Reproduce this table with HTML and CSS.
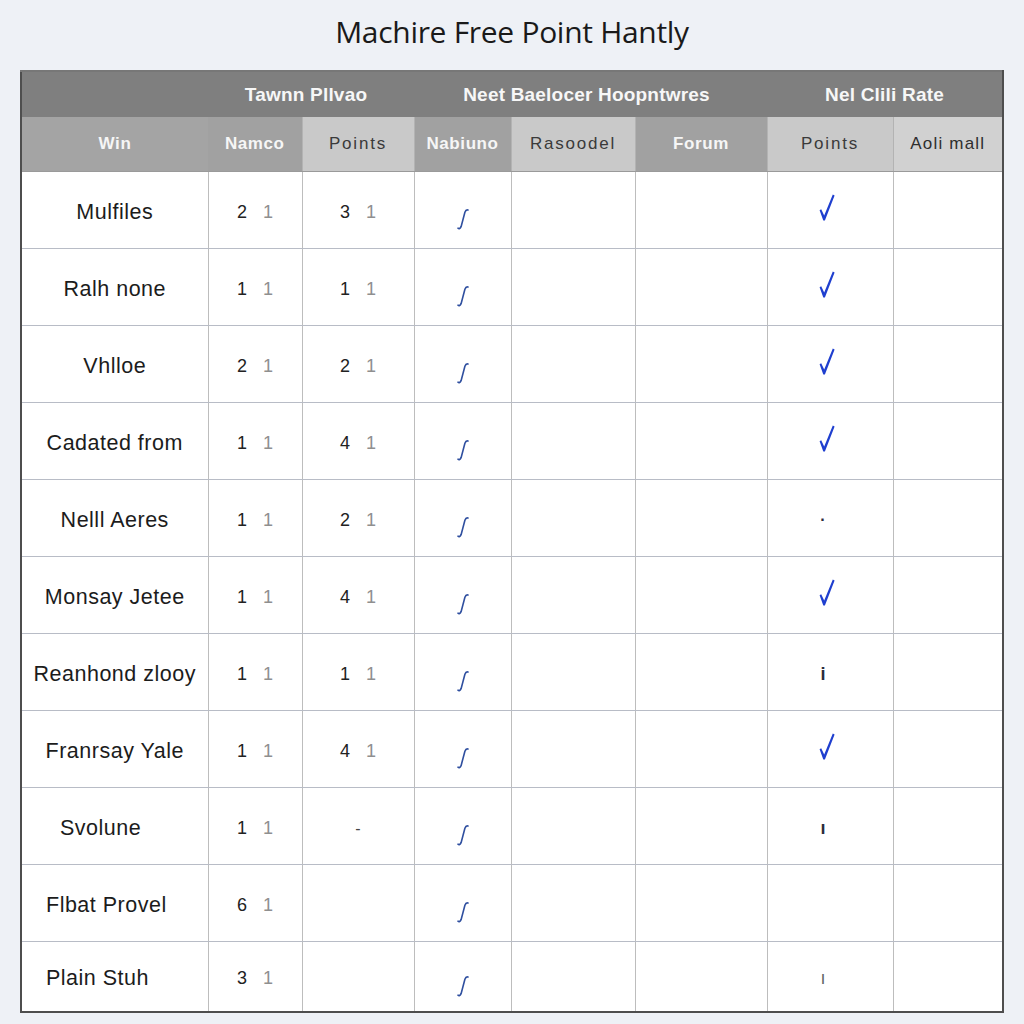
FILE: index.html
```html
<!DOCTYPE html>
<html lang="en">
<head>
<meta charset="utf-8">
<title>Machire Free Point Hantly</title>
<link rel="stylesheet" href="styles.css">
</head>
<body>
<svg width="0" height="0" class="defs">
  <defs>
    <symbol id="integ" viewBox="0 0 12 22">
      <path d="M1 20.2 Q2.6 21.6 4.1 18.6 L7.9 4.2 Q8.9 1.4 11 2" fill="none" stroke="#2f4f9f" stroke-width="1.6" stroke-linecap="round"/>
    </symbol>
    <symbol id="check" viewBox="0 0 16 27">
      <path d="M0.6 16.2 L2.2 15.2 L5.2 21.6 L13.8 0.6 L15.6 1.6 L5.9 26.4 L4.3 26.4 Z" fill="#1f3fcf"/>
    </symbol>
  </defs>
</svg>
<h1 class="title">Machire Free Point Hantly</h1>
<table class="grid">
  <colgroup>
    <col class="c1"><col class="c2"><col class="c3"><col class="c4"><col class="c5"><col class="c6"><col class="c7"><col class="c8">
  </colgroup>
  <thead>
    <tr class="group">
      <th></th>
      <th colspan="2">Tawnn Pllvao</th>
      <th colspan="3">Neet Baelocer Hoopntwres</th>
      <th colspan="2">Nel Clili Rate</th>
    </tr>
    <tr class="sub">
      <th class="dark first">Win</th>
      <th class="dark">Namco</th>
      <th class="light">Points</th>
      <th class="dark">Nabiuno</th>
      <th class="light">Rasoodel</th>
      <th class="dark">Forum</th>
      <th class="light">Points</th>
      <th class="lighter">Aoli mall</th>
    </tr>
  </thead>
  <tbody>
    <tr>
      <td class="name">Mulfiles</td>
      <td class="num"><span>2</span><span class="faint">1</span></td>
      <td class="num"><span>3</span><span class="faint">1</span></td>
      <td class="sym"><svg class="integ"><use href="#integ"/></svg></td>
      <td></td><td></td>
      <td class="pts"><svg class="check"><use href="#check"/></svg></td>
      <td></td>
    </tr>
    <tr>
      <td class="name">Ralh none</td>
      <td class="num"><span>1</span><span class="faint">1</span></td>
      <td class="num"><span>1</span><span class="faint">1</span></td>
      <td class="sym"><svg class="integ"><use href="#integ"/></svg></td>
      <td></td><td></td>
      <td class="pts"><svg class="check"><use href="#check"/></svg></td>
      <td></td>
    </tr>
    <tr>
      <td class="name">Vhlloe</td>
      <td class="num"><span>2</span><span class="faint">1</span></td>
      <td class="num"><span>2</span><span class="faint">1</span></td>
      <td class="sym"><svg class="integ"><use href="#integ"/></svg></td>
      <td></td><td></td>
      <td class="pts"><svg class="check"><use href="#check"/></svg></td>
      <td></td>
    </tr>
    <tr>
      <td class="name">Cadated from</td>
      <td class="num"><span>1</span><span class="faint">1</span></td>
      <td class="num"><span>4</span><span class="faint">1</span></td>
      <td class="sym"><svg class="integ"><use href="#integ"/></svg></td>
      <td></td><td></td>
      <td class="pts"><svg class="check"><use href="#check"/></svg></td>
      <td></td>
    </tr>
    <tr>
      <td class="name">Nelll Aeres</td>
      <td class="num"><span>1</span><span class="faint">1</span></td>
      <td class="num"><span>2</span><span class="faint">1</span></td>
      <td class="sym"><svg class="integ"><use href="#integ"/></svg></td>
      <td></td><td></td>
      <td class="pts"><span class="mark dot">·</span></td>
      <td></td>
    </tr>
    <tr>
      <td class="name">Monsay Jetee</td>
      <td class="num"><span>1</span><span class="faint">1</span></td>
      <td class="num"><span>4</span><span class="faint">1</span></td>
      <td class="sym"><svg class="integ"><use href="#integ"/></svg></td>
      <td></td><td></td>
      <td class="pts"><svg class="check"><use href="#check"/></svg></td>
      <td></td>
    </tr>
    <tr>
      <td class="name">Reanhond zlooy</td>
      <td class="num"><span>1</span><span class="faint">1</span></td>
      <td class="num"><span>1</span><span class="faint">1</span></td>
      <td class="sym"><svg class="integ"><use href="#integ"/></svg></td>
      <td></td><td></td>
      <td class="pts"><span class="mark">i</span></td>
      <td></td>
    </tr>
    <tr>
      <td class="name">Franrsay Yale</td>
      <td class="num"><span>1</span><span class="faint">1</span></td>
      <td class="num"><span>4</span><span class="faint">1</span></td>
      <td class="sym"><svg class="integ"><use href="#integ"/></svg></td>
      <td></td><td></td>
      <td class="pts"><svg class="check"><use href="#check"/></svg></td>
      <td></td>
    </tr>
    <tr>
      <td class="name shift-more">Svolune</td>
      <td class="num"><span>1</span><span class="faint">1</span></td>
      <td class="num"><span class="dash">-</span></td>
      <td class="sym"><svg class="integ"><use href="#integ"/></svg></td>
      <td></td><td></td>
      <td class="pts"><span class="mark">ı</span></td>
      <td></td>
    </tr>
    <tr>
      <td class="name shift">Flbat Provel</td>
      <td class="num"><span>6</span><span class="faint">1</span></td>
      <td></td>
      <td class="sym"><svg class="integ"><use href="#integ"/></svg></td>
      <td></td><td></td>
      <td></td>
      <td></td>
    </tr>
    <tr class="last">
      <td class="name shift">Plain Stuh</td>
      <td class="num"><span>3</span><span class="faint">1</span></td>
      <td></td>
      <td class="sym"><svg class="integ"><use href="#integ"/></svg></td>
      <td></td><td></td>
      <td class="pts"><span class="mark pale">ı</span></td>
      <td></td>
    </tr>
  </tbody>
</table>
</body>
</html>
```
FILE: styles.css
```css
html, body {
  margin: 0;
  padding: 0;
  background: #eef1f6;
}
body {
  font-family: "Liberation Sans", Arial, sans-serif;
  color: #1e1e1e;
}
.defs {
  position: absolute;
  width: 0;
  height: 0;
}
.title {
  margin: 0;
  height: 70px;
  line-height: 64px;
  text-align: center;
  font-family: "Open Sans", sans-serif;
  font-weight: 400;
  font-size: 30px;
  letter-spacing: -0.3px;
  color: #1a1a1a;
}
.grid {
  margin-left: 20px;
  width: 982px;
  table-layout: fixed;
  border-collapse: collapse;
  border: 2px solid #4e4e4e;
  border-top-color: #777;
  background: #fff;
}
.c1 { width: 187px; }
.c2 { width: 94px; }
.c3 { width: 112px; }
.c4 { width: 97px; }
.c5 { width: 124px; }
.c6 { width: 132px; }
.c7 { width: 126px; }
.c8 { width: 110px; }

th {
  padding: 0;
  text-align: center;
}
.group th {
  height: 45px;
  padding-bottom: 0;
  background: #7f7f7f;
  color: #f7f7f7;
  font-weight: 700;
  font-size: 19px;
  letter-spacing: 0.2px;
  line-height: 40px;
}
.group th:nth-child(2) {
  text-indent: -10px;
}
.group th:nth-child(3) {
  text-indent: -8px;
}
.sub th {
  height: 54px;
  font-size: 17px;
  border-right: 1px solid #b3b3b3;
  border-bottom: 1px solid #9a9a9a;
}
.sub th.dark {
  background: #a1a1a1;
  color: #f6f6f6;
  font-weight: 700;
  letter-spacing: 0.6px;
}
.sub th.first {
  border-right: none;
  background: #a4a4a4;
}
.sub th.light {
  background: #c9c9c9;
  color: #3a3a3a;
  font-weight: 400;
  letter-spacing: 1.8px;
}
.sub th.lighter {
  background: #d1d1d1;
  color: #2e2e2e;
  font-weight: 400;
  letter-spacing: 1.2px;
  border-right: none;
}

td {
  height: 72px;
  padding: 4px 0 0;
  border: 1px solid #bdbdbd;
  border-top-color: #b8bcc6;
  border-bottom-color: #b8bcc6;
  text-align: center;
  vertical-align: middle;
}
tr.last td {
  height: 65px;
}
.name {
  font-size: 21.5px;
  letter-spacing: 0.5px;
  color: #1c1c1c;
}
.name.shift {
  text-align: left;
  padding-left: 24px;
}
.name.shift-more {
  text-align: left;
  padding-left: 38px;
}
.num {
  font-size: 18px;
  color: #222;
}
.num span {
  display: inline-block;
}
.num .faint {
  color: #8f8f8f;
  margin-left: 16px;
}
.num .dash {
  color: #444;
  font-size: 16px;
}
.integ {
  display: inline-block;
  width: 12px;
  height: 22px;
  vertical-align: middle;
  transform: translateY(7px);
}
.pts {
  padding-right: 6px;
}
.check {
  display: inline-block;
  width: 16px;
  height: 27px;
  vertical-align: middle;
  transform: translateY(-5px);
}
.mark {
  display: inline-block;
  font-size: 18px;
  font-weight: 700;
  color: #2c2c3c;
  margin-right: 8px;
}
.mark.dot {
  font-size: 16px;
}
.mark.pale {
  color: #666;
  font-weight: 400;
}
```
